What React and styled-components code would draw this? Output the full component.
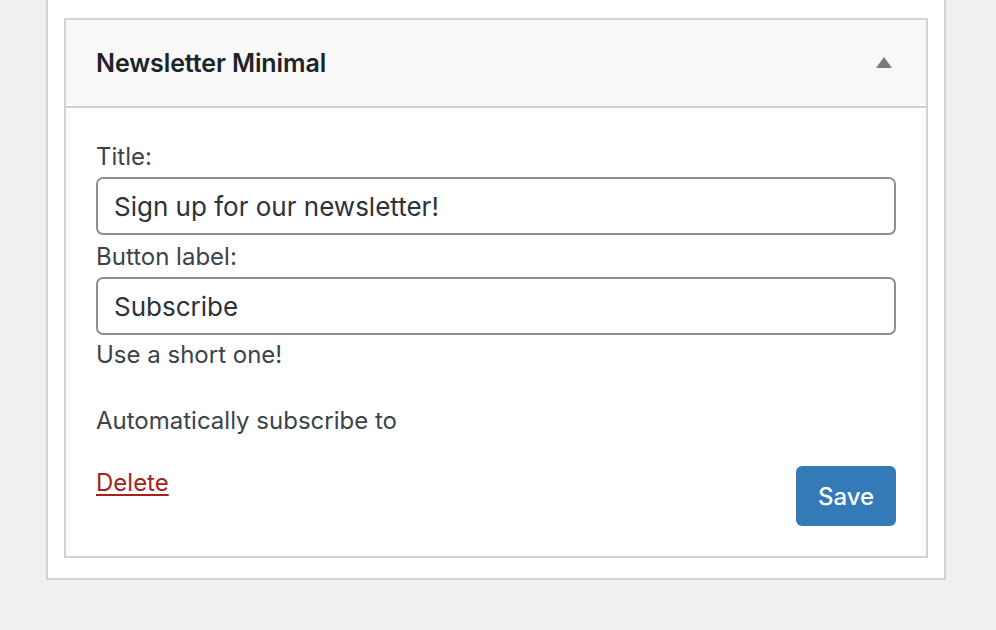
import React from "react";
import styled, { createGlobalStyle } from "styled-components";

const Global = createGlobalStyle`
  *, *::before, *::after { box-sizing: border-box; }
  html, body { margin: 0; padding: 0; background: #f0f0f1; }
  body { font-family: Inter, "Noto Sans", sans-serif; color: #3c434a; }
`;

const Panel = styled.div`
  margin-left: 46px;
  margin-top: -10px;
  width: 900px;
  background: #fff;
  border: 2px solid #d0d2d5;
  border-top: none;
  padding: 28px 16px 20px;
`;

const Widget = styled.div`
  border: 2px solid #d0d2d5;
  background: #fff;
`;

const Header = styled.div`
  display: flex;
  align-items: center;
  justify-content: space-between;
  height: 88px;
  padding: 0 34px 0 30px;
  background: #f9f9f9;
  border-bottom: 2px solid #d0d2d5;
`;

const HeaderTitle = styled.h3`
  margin: 0;
  font-size: 25px;
  font-weight: 600;
  letter-spacing: -0.1px;
  color: #1d2327;
`;

const Toggle = styled.svg`
  width: 16px;
  height: 11px;
  margin-top: -2px;
`;

const Body = styled.div`
  display: flex;
  flex-direction: column;
  padding: 33px 30px 30px;
`;

const Label = styled.label`
  display: block;
  font-size: 24px;
  line-height: 32px;
  margin: ${(p) => (p.$afterInput ? "2px" : "0")} 0 4px;
`;

const Input = styled.input`
  display: block;
  width: 100%;
  height: 58px;
  margin: 0 0 4px;
  padding: 0 16px;
  border: 2px solid #8c8f94;
  border-radius: 7px;
  font-family: inherit;
  font-size: 26px;
  color: #2c3338;
  background: #fff;
`;

const Help = styled.p`
  margin: 0;
  font-size: 24px;
  line-height: 32px;
`;

const Para = styled.p`
  margin: 34px 0 0;
  font-size: 24px;
  line-height: 32px;
`;

const Actions = styled.div`
  display: flex;
  justify-content: space-between;
  align-items: flex-start;
  margin-top: 29px;
`;

const DeleteLink = styled.a`
  color: #a4241c;
  font-size: 24px;
  line-height: 32px;
  text-decoration: underline;
  text-decoration-thickness: 2px;
  text-underline-offset: 3px;
  margin-top: 1px;
`;

const SaveButton = styled.button`
  width: 100px;
  height: 60px;
  border: none;
  border-radius: 6px;
  background: #337ab7;
  color: #fff;
  font-family: inherit;
  font-size: 24px;
  font-weight: 500;
`;

export default function App() {
  return (
    <>
      <Global />
      <Panel>
        <Widget>
          <Header>
            <HeaderTitle>Newsletter Minimal</HeaderTitle>
            <Toggle viewBox="0 0 16 11">
              <polygon points="8,0 16,11 0,11" fill="#787c82" />
            </Toggle>
          </Header>
          <Body>
            <Label>Title:</Label>
            <Input defaultValue="Sign up for our newsletter!" />
            <Label $afterInput>Button label:</Label>
            <Input defaultValue="Subscribe" />
            <Help>Use a short one!</Help>
            <Para>Automatically subscribe to</Para>
            <Actions>
              <DeleteLink href="#">Delete</DeleteLink>
              <SaveButton>Save</SaveButton>
            </Actions>
          </Body>
        </Widget>
      </Panel>
    </>
  );
}
